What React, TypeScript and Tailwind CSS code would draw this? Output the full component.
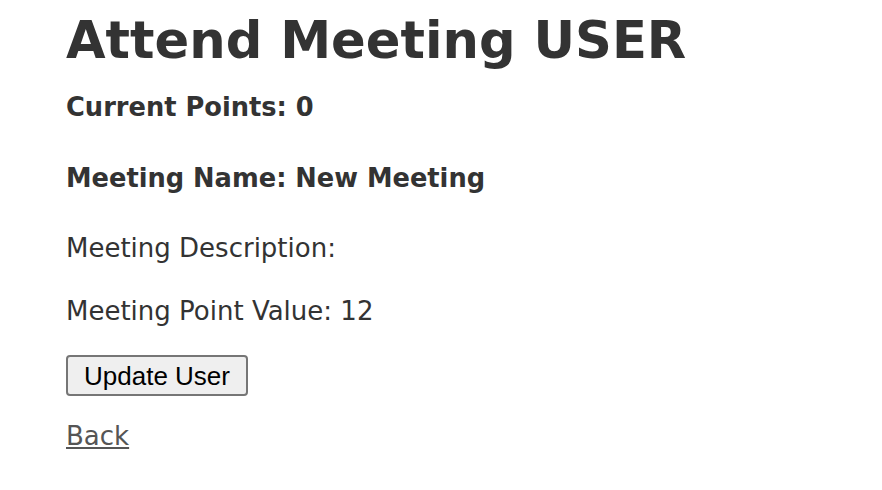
import React from 'react';

export default function App() {
  const handleUpdate = () => {
    console.log('update user');
  };

  return (
    <div className="min-h-[490px] bg-white pl-[66px] text-[#333] font-['DejaVu_Sans',Verdana,sans-serif]">
      <h1 className="pt-[4px] text-[51.2px] leading-[72px] font-bold">Attend Meeting USER</h1>
      <h3 className="mt-[16px] text-[25.7px] leading-[30px] font-bold">Current Points: 0</h3>
      <h3 className="mt-[41px] text-[25.7px] leading-[30px] font-bold">Meeting Name: New Meeting</h3>
      <p className="mt-[40px] text-[26px] leading-[30px]">Meeting Description:</p>
      <p className="mt-[33px] text-[26px] leading-[30px]">Meeting Point Value: 12</p>
      <button
        onClick={handleUpdate}
        className="mt-[29px] h-[41px] px-[16px] rounded-[4px] border-2 border-[#767676] bg-[#efefef] text-[26px] leading-none text-black font-['Liberation_Sans',Arial,sans-serif]"
      >
        Update User
      </button>
      <div className="mt-[25px]">
        <a href="#" className="text-[26px] leading-[30px] text-[#555] underline">Back</a>
      </div>
    </div>
  );
}
